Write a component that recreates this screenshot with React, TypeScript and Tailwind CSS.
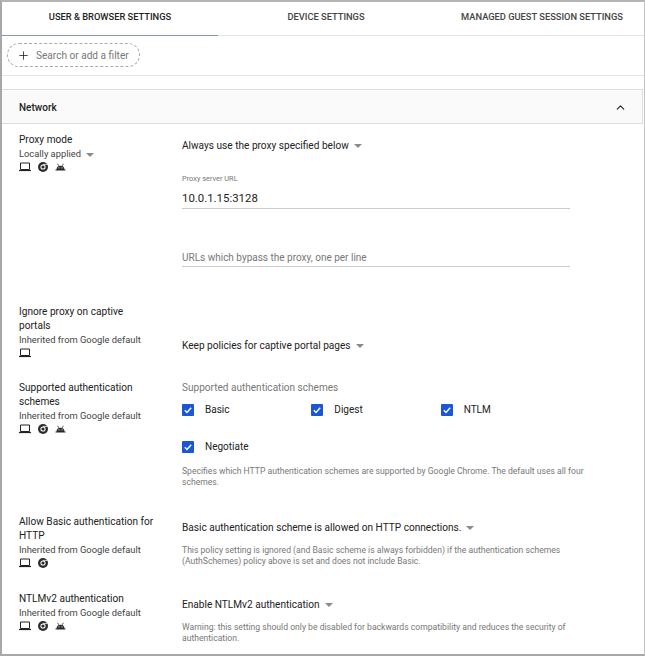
import { ChevronUp, Plus } from 'lucide-react';

const Caret = () => <span className="ml-[5px] inline-block h-0 w-0 border-x-[4.5px] border-t-[4px] border-x-transparent border-t-[#8a8a8a] align-middle" />;

const Laptop = () => (
  <svg width="12" height="10" viewBox="0 0 12 10" className="block">
    <path d="M1.5 1h9v6.5h-9z" fill="none" stroke="#222" strokeWidth="1" />
    <path d="M0 8.5h12" stroke="#222" strokeWidth="1.2" />
  </svg>
);

const Chrome = () => (
  <svg width="10" height="10" viewBox="0 0 10 10" className="block">
    <circle cx="5" cy="5" r="5" fill="#2b2b2b" />
    <circle cx="5" cy="5" r="2.6" fill="#fff" />
    <circle cx="5" cy="5" r="1.6" fill="#2b2b2b" />
    <path d="M5 2.4h4.4" stroke="#fff" strokeWidth="0.8" />
  </svg>
);

const Android = () => (
  <svg width="11" height="10" viewBox="0 0 11 10" className="block">
    <path d="M1.5 8a4 4.2 0 0 1 8 0z" fill="#2b2b2b" />
    <path d="M2.6 1.8l1.2 2M8.4 1.8L7.2 3.8" stroke="#2b2b2b" strokeWidth="0.8" />
    <path d="M0.5 8h10" stroke="#2b2b2b" strokeWidth="1" />
    <circle cx="4" cy="5.8" r="0.6" fill="#fff" />
    <circle cx="7" cy="5.8" r="0.6" fill="#fff" />
  </svg>
);

const Devices = ({ chrome = true, android = true }: { chrome?: boolean; android?: boolean }) => (
  <div className="mt-[0.5px] flex h-[10px] items-center gap-[7px]">
    <Laptop />
    {chrome && <Chrome />}
    {android && <Android />}
  </div>
);

const Policy = ({ title, status, caret, chrome, android }: { title: string; status: string; caret?: boolean; chrome?: boolean; android?: boolean }) => (
  <div className="mr-[23px] w-[140px] shrink-0">
    <div className="max-w-[136px] text-[10.1px] leading-[14px] text-[#222]">{title}</div>
    <div className="text-[9.35px] leading-[14.5px] text-[#444]">
      {status}
      {caret && <Caret />}
    </div>
    <Devices chrome={chrome} android={android} />
  </div>
);

const Select = ({ label }: { label: string }) => (
  <div className="text-[10.1px] leading-[14px] text-[#222]">
    {label}
    <Caret />
  </div>
);

const Help = ({ children }: { children: string }) => (
  <p className="text-[8.6px] leading-[11px] text-[#777]">{children}</p>
);

const Check = ({ label }: { label: string }) => (
  <div className="flex items-center gap-[11px]">
    <span className="flex h-[12px] w-[12px] items-center justify-center rounded-[1px] bg-[#1a56d6]">
      <svg width="10" height="10" viewBox="0 0 10 10">
        <path d="M1.8 5.2l2.2 2.2 4.2-4.6" fill="none" stroke="#fff" strokeWidth="1.4" />
      </svg>
    </span>
    <span className="text-[10px] text-[#222]">{label}</span>
  </div>
);

export default function App() {
  return (
    <div className="h-[656px] w-[645px] overflow-hidden border-t-2 border-r border-b-2 border-l-2 border-t-[#b5b5b5] border-r-[#c4c4c4] border-b-[#a8a8a8] border-l-[#a8a8a8] bg-white font-['Roboto',sans-serif]">
      <div className="flex h-[34px] border-b border-[#e4e4e4] pb-[3px] text-[9.3px] font-medium text-[#444]">
        <div className="relative flex w-[216px] items-center justify-center text-[#222]">
          USER &amp; BROWSER SETTINGS
          <span className="absolute inset-x-0 bottom-[-4px] h-[1px] bg-[#7f95c9]" />
        </div>
        <div className="flex w-[216px] items-center justify-center">DEVICE SETTINGS</div>
        <div className="flex flex-1 items-center justify-center pl-[6px]">MANAGED GUEST SESSION SETTINGS</div>
      </div>

      <div className="h-[40px] border-b border-[#e4e4e4] px-[5px] pt-[7px]">
        <div className="flex h-[24px] w-[133px] items-center gap-[6px] rounded-full border border-dashed border-[#aaa] pl-[9px] pt-[1px] text-[10.1px] text-[#777]">
          <Plus size={13} strokeWidth={1.5} className="text-[#222]" />
          Search or add a filter
        </div>
      </div>

      <div className="mt-[13px] mr-[1px] border-y border-r border-[#ddd]">
        <div className="flex h-[33px] items-center justify-between bg-[#fafafa] pl-[17px] pr-[15px] pt-[1px] text-[10px] font-medium text-[#222]">
          Network
          <ChevronUp size={13} strokeWidth={2} className="text-[#222]" />
        </div>
      </div>

      <div className="pl-[17px]">
        <div className="flex h-[172px] pt-[9px]">
          <Policy title="Proxy mode" status="Locally applied" caret />
          <div className="w-[388px] pt-[6px]">
            <Select label="Always use the proxy specified below" />
            <div className="mt-[21px] text-[7.4px] leading-[10px] text-[#777]">Proxy server URL</div>
            <div className="mt-[7px] border-b border-[#ccc] pb-[2px] text-[11.4px] leading-[15px] text-[#222]">10.0.1.15:3128</div>
            <div className="mt-[41px] border-b border-[#ccc] pb-[1px] text-[10px] leading-[15px] text-[#777]">URLs which bypass the proxy, one per line</div>
          </div>
        </div>

        <div className="flex h-[85px] pt-[9px]">
          <Policy title="Ignore proxy on captive portals" status="Inherited from Google default" chrome={false} android={false} />
          <div className="pt-[34px]">
            <Select label="Keep policies for captive portal pages" />
          </div>
        </div>

        <div className="flex h-[134px]">
          <Policy title="Supported authentication schemes" status="Inherited from Google default" />
          <div className="w-[420px]">
            <div className="text-[10.05px] leading-[14px] text-[#777]">Supported authentication schemes</div>
            <div className="mt-[7px] grid w-[388px] grid-cols-3 gap-y-[22px]">
              <Check label="Basic" />
              <Check label="Digest" />
              <Check label="NTLM" />
              <Check label="Negotiate" />
            </div>
            <div className="mt-[12px]">
              <Help>Specifies which HTTP authentication schemes are supported by Google Chrome. The default uses all four schemes.</Help>
            </div>
          </div>
        </div>

        <div className="flex h-[77px]">
          <Policy title="Allow Basic authentication for HTTP" status="Inherited from Google default" android={false} />
          <div className="w-[400px] pt-[6px]">
            <Select label="Basic authentication scheme is allowed on HTTP connections." />
            <div className="mt-[10px]">
              <Help>This policy setting is ignored (and Basic scheme is always forbidden) if the authentication schemes (AuthSchemes) policy above is set and does not include Basic.</Help>
            </div>
          </div>
        </div>

        <div className="flex">
          <Policy title="NTLMv2 authentication" status="Inherited from Google default" />
          <div className="w-[400px] pt-[6px]">
            <Select label="Enable NTLMv2 authentication" />
            <div className="mt-[10px]">
              <Help>Warning: this setting should only be disabled for backwards compatibility and reduces the security of authentication.</Help>
            </div>
          </div>
        </div>
      </div>
    </div>
  );
}
